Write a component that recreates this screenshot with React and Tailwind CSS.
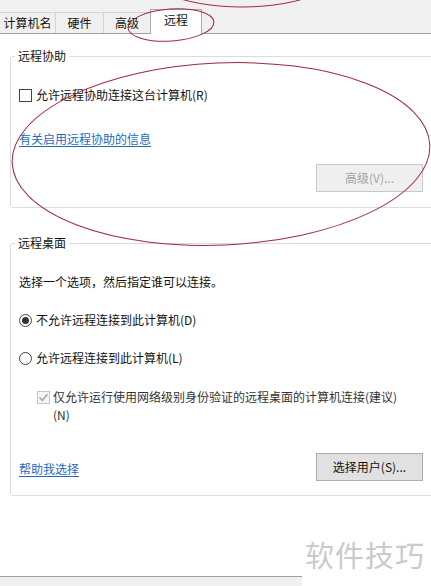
import React from "react";

const font = { fontFamily: '"Noto Sans CJK SC", "Noto Sans", sans-serif' };

function Checkbox({ checked, disabled }) {
  return (
    <span
      className={
        "w-[13px] h-[13px] flex items-center justify-center border shrink-0 " +
        (disabled ? "border-[#c4c4c4] bg-[#f4f4f4]" : "border-[#444] bg-white")
      }
    >
      {checked && (
        <svg width="11" height="11" viewBox="0 0 11 11">
          <path d="M1.5 5.5 L4.3 8.3 L9.5 2.2" fill="none" stroke={disabled ? "#a8a8a8" : "#222"} strokeWidth="1.6" />
        </svg>
      )}
    </span>
  );
}

function Radio({ checked }) {
  return (
    <span className="w-[13px] h-[13px] rounded-full border border-[#444] bg-white flex items-center justify-center shrink-0">
      {checked && <span className="w-[7px] h-[7px] rounded-full bg-[#333]" />}
    </span>
  );
}

export default function App() {
  return (
    <div className="relative w-[431px] h-[586px] overflow-hidden bg-white text-[12px] text-[#111] flex flex-col" style={font}>
      {/* Tab strip */}
      <div className="h-[34px] bg-[#f0f0f0] border-b border-[#a0a0a0] flex items-end shrink-0">
        <div className="w-[56px] h-[21px] border-t border-r border-[#d4d4d4] flex items-center justify-center leading-[16px]">计算机名</div>
        <div className="w-[48px] h-[21px] border-t border-r border-[#d4d4d4] flex items-center justify-center leading-[16px]">硬件</div>
        <div className="w-[46px] h-[21px] border-t border-[#d4d4d4] flex items-center justify-center leading-[16px]">高级</div>
        <div className="w-[52px] h-[25px] -mb-px bg-white border-t border-l border-r border-[#a9a9a9] flex justify-center pt-[2px] leading-[16px]">远程</div>
      </div>

      {/* Group 1 */}
      <fieldset className="ml-[10px] mt-[14px] w-[440px] border border-[#dcdcdc] rounded-[3px] pb-[15px] shrink-0">
        <legend className="ml-[4px] px-[3px] leading-[16px]">远程协助</legend>
        <div className="mt-[23px] ml-[8px] flex items-center gap-[4px] h-[16px] leading-[16px]">
          <Checkbox />
          <span>允许远程协助连接这台计算机(R)</span>
        </div>
        <div className="mt-[28px] ml-[8px] h-[16px] leading-[16px]">
          <span className="text-[#1c6bc2] underline underline-offset-2">有关启用远程协助的信息</span>
        </div>
        <div className="mt-[17px] ml-[305px] w-[107px] h-[28px] border border-[#c9c9c9] bg-[#efefef] text-[#a3a3a3] flex items-center justify-center leading-[16px]">
          高级(V)...
        </div>
      </fieldset>

      {/* Group 2 */}
      <fieldset className="ml-[10px] mt-[27px] w-[440px] border border-[#dcdcdc] rounded-[3px] pb-[14px] shrink-0">
        <legend className="ml-[4px] px-[3px] leading-[16px]">远程桌面</legend>
        <div className="mt-[23px] ml-[8px] h-[16px] leading-[16px]">选择一个选项，然后指定谁可以连接。</div>
        <div className="mt-[22px] ml-[8px] flex items-center gap-[4px] h-[16px] leading-[16px]">
          <Radio checked />
          <span>不允许远程连接到此计算机(D)</span>
        </div>
        <div className="mt-[22px] ml-[8px] flex items-center gap-[4px] h-[16px] leading-[16px]">
          <Radio />
          <span>允许远程连接到此计算机(L)</span>
        </div>
        <div className="mt-[22px] ml-[26px] flex items-start gap-[3px] leading-[18px]">
          <span className="mt-[3px]"><Checkbox checked disabled /></span>
          <span className="text-[#333]">
            仅允许运行使用网络级别身份验证的远程桌面的计算机连接(建议)
            <br />
            (N)
          </span>
        </div>
        <div className="mt-[29px] ml-[8px] flex items-center h-[28px]">
          <span className="w-[297px] pt-[3px] leading-[16px] text-[#1c6bc2] underline underline-offset-2">帮助我选择</span>
          <div className="w-[107px] h-[28px] border border-[#adadad] bg-[#e1e1e1] flex items-center justify-center leading-[16px]">
            选择用户(S)...
          </div>
        </div>
      </fieldset>

      {/* bottom bar */}
      <div className="mt-auto w-[302px] h-[10px] border-t border-[#a0a0a0] bg-[#f0f0f0] shrink-0" />

      {/* watermark */}
      <div className="absolute left-[305px] top-[536px] text-[29px] leading-[36px] text-[#cacaca] tracking-[1px]">软件技巧</div>

      {/* red annotation ellipses */}
      <svg className="absolute inset-0 pointer-events-none" width="431" height="586" viewBox="0 0 431 586">
        <g fill="none" stroke="#9e2a3a" strokeWidth="1">
          <ellipse cx="242" cy="-40" rx="110" ry="47" />
          <ellipse cx="171" cy="25" rx="43" ry="16" transform="rotate(-4 171 25)" />
          <ellipse cx="221" cy="154" rx="209" ry="91" transform="rotate(-2.5 221 154)" />
        </g>
      </svg>
    </div>
  );
}
